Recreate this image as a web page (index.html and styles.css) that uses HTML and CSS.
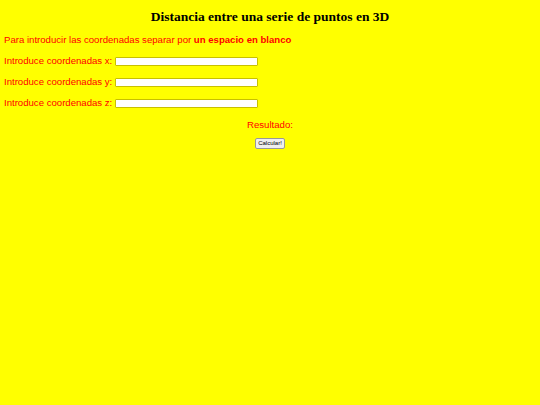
FILE: index.html
```html
<!DOCTYPE html>
<html>
<head>
<meta charset="utf-8">
<link rel="stylesheet" href="styles.css">
</head>
<body>
<h1 class="title">Distancia entre una serie de puntos en 3D</h1>
<p class="intro">Para introducir las coordenadas separar por <b>un espacio en blanco</b></p>
<div class="row"><label>Introduce coordenadas x:</label> <input type="text" class="field"></div>
<div class="row"><label>Introduce coordenadas y:</label> <input type="text" class="field"></div>
<div class="row"><label>Introduce coordenadas z:</label> <input type="text" class="field"></div>
<div class="result">Resultado:</div>
<div class="actions"><button class="btn">Calcular!</button></div>
</body>
</html>
```
FILE: styles.css
```css
html, body { background: #ffff00; }
body { margin: 0; padding: 0 4px; font-family: "Liberation Sans", Arial, sans-serif; color: #ff0000; font-size: 9.6px; }
.title { font-family: "Liberation Serif", "Times New Roman", serif; color: #000; font-size: 13.5px; font-weight: bold; text-align: center; margin: 9px 0 0; line-height: 16px; }
.intro { margin: 9px 0 0; line-height: 12px; }
.intro b { font-weight: bold; }
.row { display: flex; align-items: center; gap: 3px; margin-top: 9px; height: 12px; }
.row label { line-height: 12px; }
.field { width: 141px; height: 7px; padding: 0; margin: 0; border: 1px solid #c8c000; background: #fff; border-radius: 1px; }
.result { text-align: center; margin-top: 10px; line-height: 12px; }
.actions { text-align: center; margin-top: 5px; }
.btn { font-family: "Liberation Sans", Arial, sans-serif; font-size: 6px; padding: 1px 2px; border: 1px solid #999; background: #efefef; border-radius: 2px; color: #000; line-height: 7px; }
```
